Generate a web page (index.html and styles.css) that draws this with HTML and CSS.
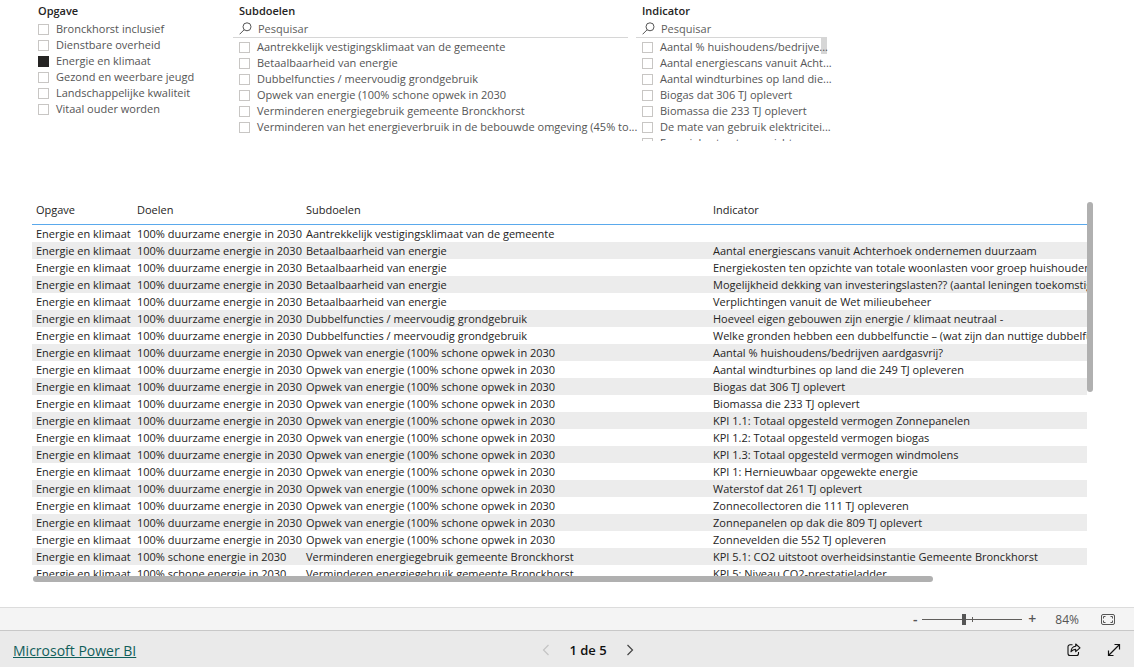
FILE: index.html
```html
<!DOCTYPE html>
<html lang="nl">
<head>
<meta charset="utf-8">
<title>Microsoft Power BI</title>
<meta name="viewport" content="width=device-width, initial-scale=1">
<link rel="stylesheet" href="styles.css">
</head>
<body>
<main class="report">
  <div class="slicers">
    <section class="slicer">
      <h2 class="slicer-title">Opgave</h2>
      <div class="options">
        <label class="option"><input type="checkbox"><span>Bronckhorst inclusief</span></label>
        <label class="option"><input type="checkbox"><span>Dienstbare overheid</span></label>
        <label class="option"><input type="checkbox" checked><span>Energie en klimaat</span></label>
        <label class="option"><input type="checkbox"><span>Gezond en weerbare jeugd</span></label>
        <label class="option"><input type="checkbox"><span>Landschappelijke kwaliteit</span></label>
        <label class="option"><input type="checkbox"><span>Vitaal ouder worden</span></label>
      </div>
    </section>
    <section class="slicer">
      <h2 class="slicer-title">Subdoelen</h2>
      <div class="search">
        <svg class="search-icon" viewBox="0 0 13 13" aria-hidden="true"><circle cx="8" cy="4.8" r="4"/><path d="M5.2 7.7 0.6 12.3"/></svg>
        <input type="text" placeholder="Pesquisar" aria-label="Pesquisar subdoelen">
      </div>
      <div class="options">
        <label class="option"><input type="checkbox"><span>Aantrekkelijk vestigingsklimaat van de gemeente</span></label>
        <label class="option"><input type="checkbox"><span>Betaalbaarheid van energie</span></label>
        <label class="option"><input type="checkbox"><span>Dubbelfuncties / meervoudig grondgebruik</span></label>
        <label class="option"><input type="checkbox"><span>Opwek van energie (100% schone opwek in 2030</span></label>
        <label class="option"><input type="checkbox"><span>Verminderen energiegebruik gemeente Bronckhorst</span></label>
        <label class="option"><input type="checkbox"><span>Verminderen van het energieverbruik in de bebouwde omgeving (45% to...</span></label>
      </div>
    </section>
    <section class="slicer">
      <h2 class="slicer-title">Indicator</h2>
      <div class="search">
        <svg class="search-icon" viewBox="0 0 13 13" aria-hidden="true"><circle cx="8" cy="4.8" r="4"/><path d="M5.2 7.7 0.6 12.3"/></svg>
        <input type="text" placeholder="Pesquisar" aria-label="Pesquisar indicator">
      </div>
      <div class="options scrolling">
        <label class="option"><input type="checkbox"><span>Aantal % huishoudens/bedrijve...</span></label>
        <label class="option"><input type="checkbox"><span>Aantal energiescans vanuit Acht...</span></label>
        <label class="option"><input type="checkbox"><span>Aantal windturbines op land die...</span></label>
        <label class="option"><input type="checkbox"><span>Biogas dat 306 TJ oplevert</span></label>
        <label class="option"><input type="checkbox"><span>Biomassa die 233 TJ oplevert</span></label>
        <label class="option"><input type="checkbox"><span>De mate van gebruik elektricitei...</span></label>
        <label class="option"><input type="checkbox"><span>Energiekosten ten opzichte</span></label>
      </div>
    </section>
  </div>

  <div class="matrix">
    <div class="matrix-view">
      <table class="data">
        <colgroup><col class="col-opgave"><col class="col-doelen"><col class="col-subdoelen"><col></colgroup>
        <thead><tr><th>Opgave</th><th>Doelen</th><th>Subdoelen</th><th>Indicator</th></tr></thead>
        <tbody>
          <tr><td>Energie en klimaat</td><td>100% duurzame energie in 2030</td><td>Aantrekkelijk vestigingsklimaat van de gemeente</td><td></td></tr>
          <tr><td>Energie en klimaat</td><td>100% duurzame energie in 2030</td><td>Betaalbaarheid van energie</td><td>Aantal energiescans vanuit Achterhoek ondernemen duurzaam</td></tr>
          <tr><td>Energie en klimaat</td><td>100% duurzame energie in 2030</td><td>Betaalbaarheid van energie</td><td>Energiekosten ten opzichte van totale woonlasten voor groep huishoudens</td></tr>
          <tr><td>Energie en klimaat</td><td>100% duurzame energie in 2030</td><td>Betaalbaarheid van energie</td><td>Mogelijkheid dekking van investeringslasten?? (aantal leningen toekomstigb</td></tr>
          <tr><td>Energie en klimaat</td><td>100% duurzame energie in 2030</td><td>Betaalbaarheid van energie</td><td>Verplichtingen vanuit de Wet milieubeheer</td></tr>
          <tr><td>Energie en klimaat</td><td>100% duurzame energie in 2030</td><td>Dubbelfuncties / meervoudig grondgebruik</td><td>Hoeveel eigen gebouwen zijn energie / klimaat neutraal -</td></tr>
          <tr><td>Energie en klimaat</td><td>100% duurzame energie in 2030</td><td>Dubbelfuncties / meervoudig grondgebruik</td><td>Welke gronden hebben een dubbelfunctie – (wat zijn dan nuttige dubbelfun</td></tr>
          <tr><td>Energie en klimaat</td><td>100% duurzame energie in 2030</td><td>Opwek van energie (100% schone opwek in 2030</td><td>Aantal % huishoudens/bedrijven aardgasvrij?</td></tr>
          <tr><td>Energie en klimaat</td><td>100% duurzame energie in 2030</td><td>Opwek van energie (100% schone opwek in 2030</td><td>Aantal windturbines op land die 249 TJ opleveren</td></tr>
          <tr><td>Energie en klimaat</td><td>100% duurzame energie in 2030</td><td>Opwek van energie (100% schone opwek in 2030</td><td>Biogas dat 306 TJ oplevert</td></tr>
          <tr><td>Energie en klimaat</td><td>100% duurzame energie in 2030</td><td>Opwek van energie (100% schone opwek in 2030</td><td>Biomassa die 233 TJ oplevert</td></tr>
          <tr><td>Energie en klimaat</td><td>100% duurzame energie in 2030</td><td>Opwek van energie (100% schone opwek in 2030</td><td>KPI 1.1: Totaal opgesteld vermogen Zonnepanelen</td></tr>
          <tr><td>Energie en klimaat</td><td>100% duurzame energie in 2030</td><td>Opwek van energie (100% schone opwek in 2030</td><td>KPI 1.2: Totaal opgesteld vermogen biogas</td></tr>
          <tr><td>Energie en klimaat</td><td>100% duurzame energie in 2030</td><td>Opwek van energie (100% schone opwek in 2030</td><td>KPI 1.3: Totaal opgesteld vermogen windmolens</td></tr>
          <tr><td>Energie en klimaat</td><td>100% duurzame energie in 2030</td><td>Opwek van energie (100% schone opwek in 2030</td><td>KPI 1: Hernieuwbaar opgewekte energie</td></tr>
          <tr><td>Energie en klimaat</td><td>100% duurzame energie in 2030</td><td>Opwek van energie (100% schone opwek in 2030</td><td>Waterstof dat 261 TJ oplevert</td></tr>
          <tr><td>Energie en klimaat</td><td>100% duurzame energie in 2030</td><td>Opwek van energie (100% schone opwek in 2030</td><td>Zonnecollectoren die 111 TJ opleveren</td></tr>
          <tr><td>Energie en klimaat</td><td>100% duurzame energie in 2030</td><td>Opwek van energie (100% schone opwek in 2030</td><td>Zonnepanelen op dak die 809 TJ oplevert</td></tr>
          <tr><td>Energie en klimaat</td><td>100% duurzame energie in 2030</td><td>Opwek van energie (100% schone opwek in 2030</td><td>Zonnevelden die 552 TJ opleveren</td></tr>
          <tr><td>Energie en klimaat</td><td>100% schone energie in 2030</td><td>Verminderen energiegebruik gemeente Bronckhorst</td><td>KPI 5.1: CO2 uitstoot overheidsinstantie Gemeente Bronckhorst</td></tr>
          <tr><td>Energie en klimaat</td><td>100% schone energie in 2030</td><td>Verminderen energiegebruik gemeente Bronckhorst</td><td>KPI 5: Niveau CO2-prestatieladder</td></tr>
        </tbody>
      </table>
    </div>
    <div class="scroll-v"></div>
    <div class="scroll-h"></div>
  </div>
</main>

<div class="zoombar">
  <button type="button" class="zoom-step" aria-label="Zoom out">-</button>
  <input class="zoom-slider" type="range" min="0" max="100" value="41" aria-label="Zoom">
  <button type="button" class="zoom-step" aria-label="Zoom in">+</button>
  <span class="zoom-value">84%</span>
  <button type="button" class="icon-button" aria-label="Fit to page">
    <svg width="14" height="11" viewBox="0 0 14 11" fill="none" stroke="#555" aria-hidden="true"><rect x=".5" y=".5" width="13" height="10" rx="1.5"/><path d="M2.5 4.5v-2h2M9.500 2.500h2v2M11.500 6.500v2h-2M4.500 8.500h-2v-2"/></svg>
  </button>
</div>

<footer class="footer">
  <a class="brand" href="#">Microsoft Power BI</a>
  <nav class="pager" aria-label="Pages">
    <button type="button" class="icon-button" aria-label="Previous page" disabled><svg width="8" height="12" viewBox="0 0 8 12" fill="none" stroke="#c4c4c4" stroke-width="1.2" aria-hidden="true"><path d="M6.500 1 1.500 6l5 5"/></svg></button>
    <span class="page-label">1 de 5</span>
    <button type="button" class="icon-button" aria-label="Next page"><svg width="8" height="12" viewBox="0 0 8 12" fill="none" stroke="#444" stroke-width="1.2" aria-hidden="true"><path d="M1.500 1l5 5-5 5"/></svg></button>
  </nav>
  <div class="actions">
    <button type="button" class="icon-button" aria-label="Share"><svg width="14" height="14" viewBox="0 0 14 14" fill="none" stroke="#111" stroke-width="1.1" stroke-linejoin="round" aria-hidden="true"><path d="M5.500 1.800H3A2 2 0 0 0 1 3.800V10.500a2 2 0 0 0 2 2h6.500a2 2 0 0 0 2-2V9"/><path d="M8.700 1v2.300C5.500 3.500 4.200 5.500 4 8.700 5.200 7 6.500 6.400 8.700 6.400v2.300L13 4.900z"/></svg></button>
    <button type="button" class="icon-button" aria-label="Full screen"><svg width="14" height="14" viewBox="0 0 14 14" fill="none" stroke="#111" stroke-width="1.2" aria-hidden="true"><path d="M1.500 12.500l11-11M7.500 1.500h5v5M1.500 7.500v5h5"/></svg></button>
  </div>
</footer>
</body>
</html>
```

FILE: styles.css
```css
* { box-sizing: border-box; }

body {
  margin: 0;
  height: 100vh;
  display: flex;
  flex-direction: column;
  background: #fff;
  color: #252423;
  font-family: "Open Sans", "Noto Sans", sans-serif;
  font-size: 11px;
}

button {
  padding: 0;
  border: 0;
  background: none;
  font: inherit;
  color: inherit;
}

.report {
  flex: 1;
  min-height: 0;
  display: flex;
  flex-direction: column;
  padding: 2px 40px 25px 32px;
}

/* Slicers */
.slicers {
  display: grid;
  grid-template-columns: 193fr 395fr 191fr 259fr;
  grid-template-rows: minmax(0, 1fr);
  column-gap: 8px;
  height: 139px;
  flex: none;
}

.slicer {
  min-width: 0;
  display: flex;
  flex-direction: column;
}

.slicer-title {
  margin: 0;
  padding: 0 0 1px 6px;
  font-size: 11px;
  font-weight: 600;
  line-height: 17px;
}

.search {
  flex: none;
  display: flex;
  align-items: center;
  gap: 6px;
  height: 18px;
  padding-left: 6px;
  border-bottom: 1px solid #d6d6d6;
}

.search-icon {
  width: 13px;
  height: 13px;
  flex: none;
  fill: none;
  stroke: #555;
}

.search input {
  flex: 1;
  min-width: 0;
  padding: 0;
  border: 0;
  outline: 0;
  background: none;
  font: inherit;
  line-height: 16px;
}

.search input::placeholder { color: #605e5c; opacity: 1; }

.options {
  padding: 1px 0 0 6px;
  min-height: 0;
  overflow-x: visible;
  overflow-y: clip;
}

.option {
  display: flex;
  align-items: center;
  gap: 7px;
  height: 16px;
  line-height: 16px;
  color: #555;
  white-space: nowrap;
}

.option input {
  appearance: none;
  flex: none;
  width: 11px;
  height: 11px;
  margin: 0;
  border: 1px solid #c8c6c4;
}

.option input:checked {
  background: #252423;
  border-color: #252423;
}

.scrolling {
  background: linear-gradient(#d6d6d6, #d6d6d6) right top / 6px 16px no-repeat;
}

/* Table */
.matrix {
  flex: 1;
  min-height: 0;
  margin-top: 56px;
  display: grid;
  grid-template-columns: minmax(0, 1fr) 7px;
  grid-template-rows: minmax(0, 1fr) 6px;
}

.matrix-view {
  overflow: hidden;
}

.data {
  width: 100%;
  table-layout: fixed;
  border-collapse: separate;
  border-spacing: 0;
}

.col-opgave { width: 101px; }
.col-doelen { width: 169px; }
.col-subdoelen { width: 407px; }

.data th,
.data td {
  padding: 0 0 0 4px;
  text-align: left;
  font-weight: 400;
  white-space: nowrap;
}

.data th {
  height: 28px;
  padding-top: 5px;
  line-height: 16px;
  vertical-align: top;
  border-bottom: 1px solid #5aa9ec;
}

.data td {
  height: 17px;
  line-height: 16px;
}

.data tbody tr:nth-child(even) { background: #ececec; }

.scroll-v,
.scroll-h {
  background: #b0b0b0;
  border-radius: 3px;
}

.scroll-v {
  width: 6px;
  height: 50%;
  margin-top: 5px;
}

.scroll-h {
  width: 85.3%;
  margin-left: 1px;
}

/* Zoom bar */
.zoombar {
  flex: none;
  display: flex;
  align-items: center;
  justify-content: flex-end;
  height: 23px;
  padding-right: 19px;
  background: #f4f4f4;
  border-top: 1px solid #dcdcdc;
  font-size: 12px;
  color: #555;
}

.zoom-step {
  width: 8px;
  font-size: 14px;
  font-weight: 600;
  line-height: 16px;
}

.zoom-slider {
  appearance: none;
  width: 100px;
  height: 12px;
  margin: 0 6px 0 3px;
  background:
    linear-gradient(#605e5c, #605e5c) 50% 50% / 1px 5px no-repeat,
    linear-gradient(#605e5c, #605e5c) 0 50% / 100% 1px no-repeat;
}

.zoom-slider::-webkit-slider-thumb {
  appearance: none;
  width: 4px;
  height: 11px;
  background: #555;
}

.zoom-value {
  margin: 0 22px 0 19px;
}

.icon-button {
  display: flex;
  align-items: center;
  justify-content: center;
}

/* Footer */
.footer {
  flex: none;
  display: grid;
  grid-template-columns: 1fr auto 1fr;
  align-items: center;
  height: 37px;
  padding: 2px 13px 0;
  background: #eaeaea;
  border-top: 1px solid #c8c8c8;
}

.brand {
  justify-self: start;
  font-size: 14px;
  color: #115e5a;
}

.pager {
  display: flex;
  align-items: center;
  gap: 19px;
  padding-left: 42px;
}

.page-label {
  font-size: 13px;
  font-weight: 600;
  color: #111;
}

.actions {
  justify-self: end;
  display: flex;
  gap: 26px;
}
```
